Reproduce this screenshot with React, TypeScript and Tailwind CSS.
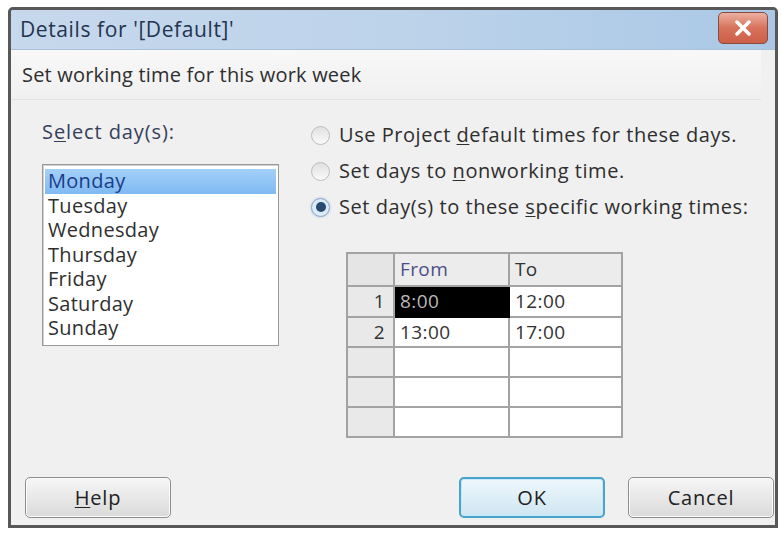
import React, { useState } from 'react';

const DAYS = ['Monday', 'Tuesday', 'Wednesday', 'Thursday', 'Friday', 'Saturday', 'Sunday'];

const TIMES: { from: string; to: string }[] = [
  { from: '8:00', to: '12:00' },
  { from: '13:00', to: '17:00' },
  { from: '', to: '' },
  { from: '', to: '' },
  { from: '', to: '' },
];

const font = { fontFamily: '"Open Sans", "Noto Sans", sans-serif' };

// Accelerator key letter, drawn underlined like a Win32 label
const Key: React.FC<{ children: React.ReactNode }> = ({ children }) => (
  <span className="underline underline-offset-2 decoration-1">{children}</span>
);

const Radio: React.FC<{ checked: boolean; onClick: () => void; children: React.ReactNode }> = ({
  checked,
  onClick,
  children,
}) => (
  <div className="flex items-center h-[36px] cursor-default" onClick={onClick}>
    <span
      className={
        'w-[19px] h-[19px] rounded-full border flex items-center justify-center shrink-0 ' +
        (checked
          ? 'border-[#8fa7c2] bg-[#dce9f6] shadow-[0_0_3px_#a9c9ea]'
          : 'border-[#bdbdbd] bg-gradient-to-b from-[#e0e0e0] to-[#fafafa]')
      }
    >
      {checked && <span className="w-[10px] h-[10px] rounded-full bg-[#274a70]" />}
    </span>
    <span className="ml-[9px] text-[20px] text-[#2e2e2e] leading-none tracking-[0.55px]">{children}</span>
  </div>
);

const DialogButton: React.FC<{ primary?: boolean; children: React.ReactNode }> = ({ primary, children }) => (
  <button
    className={
      'w-[146px] h-[41px] rounded-[5px] text-[20px] tracking-[0.8px] text-[#222] bg-gradient-to-b ' +
      (primary
        ? 'border-2 border-[#4aa3c8] from-[#eef7fc] to-[#cfe6f2] shadow-[inset_0_0_0_1px_#c6e9f8]'
        : 'border border-[#8e8e8e] from-[#f6f6f6] to-[#dadada] shadow-[inset_0_0_0_1px_#fbfbfb]')
    }
  >
    {children}
  </button>
);

const App: React.FC = () => {
  const [day, setDay] = useState(0);
  const [mode, setMode] = useState(2);

  return (
    <div className="w-[781px] h-[533px] bg-white pt-[7px] pl-[8px] pr-[3px] pb-[5px]" style={font}>
      <div className="w-full h-full flex flex-col border-[3px] border-[#585858] rounded-t-[5px] bg-[#f0f0f0] overflow-hidden">
        {/* Title bar */}
        <div className="relative h-[40px] shrink-0 flex items-center pl-[9px] bg-gradient-to-r from-[#c6d8ec] via-[#bdd3ea] to-[#aac8e6] border-b border-[#a9c0d8]">
          <span className="text-[21px] text-[#24344f] tracking-[0.6px]">Details for '[Default]'</span>
          <div className="absolute right-[7px] top-[2px] w-[50px] h-[32px] rounded-[5px] border border-[#8a4a3e] bg-gradient-to-b from-[#eab0a2] via-[#d7725a] to-[#cc5f48] flex items-center justify-center">
            <svg width="18" height="16" viewBox="0 0 18 16">
              <path d="M3 2 L15 14 M15 2 L3 14" stroke="#fff" strokeWidth="3.5" strokeLinecap="round" />
            </svg>
          </div>
        </div>

        {/* Header strip */}
        <div className="h-[50px] shrink-0 flex items-center pl-[11px] mr-[14px] border-b border-[#e2e2e2] bg-gradient-to-b from-[#f8f8f8] to-[#f0f0f0]">
          <span className="text-[20px] text-[#2e2e2e] tracking-[0.2px]">Set working time for this work week</span>
        </div>

        <div className="flex-1 flex flex-col pl-[14px] pr-[1px] pt-[18px] pb-[7px]">
          <div className="flex flex-1">
            {/* Day list */}
            <div className="w-[271px] shrink-0 pl-[17px]">
              <div className="h-[28px] flex items-center text-[20px] text-[#34405a] tracking-[0.9px]">
                S<Key>e</Key>lect day(s):
              </div>
              <div className="mt-[18px] w-[237px] h-[182px] border border-[#9a9a9a] bg-white pt-[4px] px-[2px] shadow-[inset_1px_1px_0_#d0d0d0]">
                {DAYS.map((d, i) => (
                  <div
                    key={d}
                    onClick={() => setDay(i)}
                    className={
                      'h-[24.5px] flex items-center pl-[3px] text-[20px] leading-none tracking-[0.3px] ' +
                      (i === day ? 'bg-gradient-to-b from-[#a3d0f8] to-[#7fbaf2] text-[#1c3c8a]' : 'text-[#2f2f2f]')
                    }
                  >
                    {d}
                  </div>
                ))}
              </div>
            </div>

            {/* Working time options */}
            <div className="flex-1 pl-[15px] -mt-[1px]">
              <Radio checked={mode === 0} onClick={() => setMode(0)}>
                Use Project <Key>d</Key>efault times for these days.
              </Radio>
              <Radio checked={mode === 1} onClick={() => setMode(1)}>
                Set days to <Key>n</Key>onworking time.
              </Radio>
              <Radio checked={mode === 2} onClick={() => setMode(2)}>
                Set day(s) to these <Key>s</Key>pecific working times:
              </Radio>

              <table className="mt-[27px] ml-[35px] border-collapse border-2 border-[#a3a3a3] text-[19px] text-[#333] tracking-[0.4px]">
                <thead>
                  <tr className="h-[33px] bg-[#ececec]">
                    <th className="w-[47px] border-2 border-[#a3a3a3] bg-[#e5e5e5]" />
                    <th className="w-[115px] border-2 border-[#a3a3a3] text-left font-normal pl-[5px] text-[#4b4d88]">From</th>
                    <th className="w-[113px] border-2 border-[#a3a3a3] text-left font-normal pl-[5px]">To</th>
                  </tr>
                </thead>
                <tbody>
                  {TIMES.map((t, i) => (
                    <tr key={i} className="h-[30px]">
                      <td className="border-2 border-[#a3a3a3] bg-[#e9e9e9] text-right pr-[8px]">{i < 2 ? i + 1 : ''}</td>
                      <td
                        className={
                          'border-2 border-[#a3a3a3] pl-[5px] ' +
                          (i === 0 ? 'bg-black text-[#b9b9b9] border-black' : 'bg-white')
                        }
                      >
                        {t.from}
                      </td>
                      <td className="border-2 border-[#a3a3a3] bg-white pl-[5px]">{t.to}</td>
                    </tr>
                  ))}
                </tbody>
              </table>
            </div>
          </div>

          {/* Dialog buttons */}
          <div className="flex items-center">
            <DialogButton>
              <Key>H</Key>elp
            </DialogButton>
            <div className="flex-1" />
            <DialogButton primary>OK</DialogButton>
            <div className="w-[23px]" />
            <DialogButton>Cancel</DialogButton>
          </div>
        </div>
      </div>
    </div>
  );
};

export default App;
